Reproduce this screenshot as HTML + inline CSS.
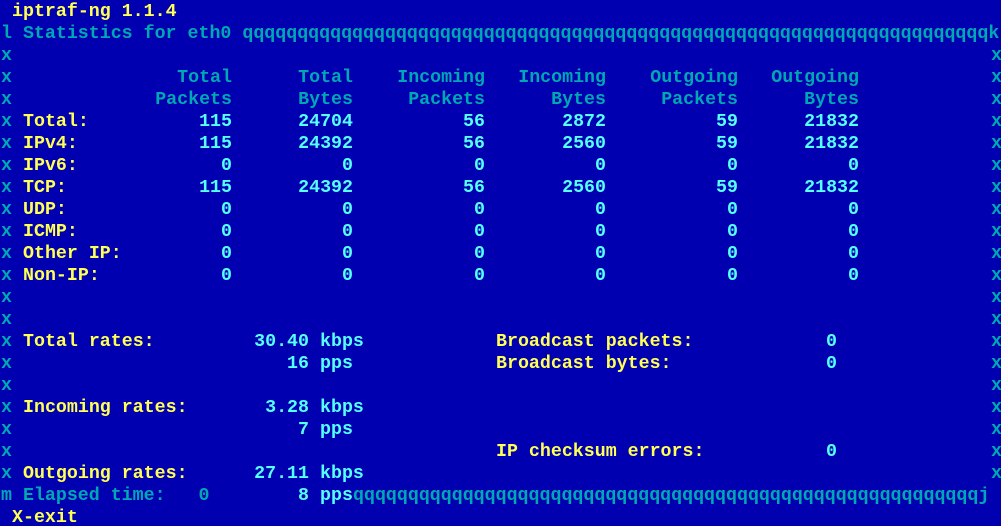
<!DOCTYPE html>
<html><head><meta charset="utf-8"><style>
html,body{margin:0;padding:0;background:#0000b0;width:1001px;height:526px;overflow:hidden}
body{position:relative;font-family:"Liberation Mono",monospace;font-weight:bold;font-size:18.3px}
#w{position:absolute;left:1px;top:2px;width:1001px;height:526px}
.r{position:absolute;left:0;width:1001px;height:22px;line-height:22px}
.r span{position:absolute;top:0;white-space:pre}
.d{color:#00a8b4}.b{color:#55ffff}.y{color:#ffff55}
.n{left:0;text-align:right}
.c1{width:231px}.c2{width:352px}.c3{width:484px}.c4{width:605px}.c5{width:737px}.c6{width:858px}
.rt{width:308px}
.xl{left:0}.xr{left:990px}
</style></head><body><div id="w">
<div class="r" style="top:-1px"><span class="y" style="left:11px">iptraf-ng 1.1.4</span></div>
<div class="r" style="top:21px"><span class="d" style="left:0">l Statistics for eth0 qqqqqqqqqqqqqqqqqqqqqqqqqqqqqqqqqqqqqqqqqqqqqqqqqqqqqqqqqqqqqqqqqqqqk</span></div>
<div class="r" style="top:43px"><span class="d xl">x</span><span class="d xr">x</span></div>
<div class="r" style="top:65px"><span class="d xl">x</span><span class="d xr">x</span>
<span class="d n c1">Total</span><span class="d n c2">Total</span><span class="d n c3">Incoming</span><span class="d n c4">Incoming</span><span class="d n c5">Outgoing</span><span class="d n c6">Outgoing</span></div>
<div class="r" style="top:87px"><span class="d xl">x</span><span class="d xr">x</span>
<span class="d n c1">Packets</span><span class="d n c2">Bytes</span><span class="d n c3">Packets</span><span class="d n c4">Bytes</span><span class="d n c5">Packets</span><span class="d n c6">Bytes</span></div>
<div class="r" style="top:109px"><span class="d xl">x</span><span class="d xr">x</span><span class="y" style="left:22px">Total:</span>
<span class="b n c1">115</span><span class="b n c2">24704</span><span class="b n c3">56</span><span class="b n c4">2872</span><span class="b n c5">59</span><span class="b n c6">21832</span></div>
<div class="r" style="top:131px"><span class="d xl">x</span><span class="d xr">x</span><span class="y" style="left:22px">IPv4:</span>
<span class="b n c1">115</span><span class="b n c2">24392</span><span class="b n c3">56</span><span class="b n c4">2560</span><span class="b n c5">59</span><span class="b n c6">21832</span></div>
<div class="r" style="top:153px"><span class="d xl">x</span><span class="d xr">x</span><span class="y" style="left:22px">IPv6:</span>
<span class="b n c1">0</span><span class="b n c2">0</span><span class="b n c3">0</span><span class="b n c4">0</span><span class="b n c5">0</span><span class="b n c6">0</span></div>
<div class="r" style="top:175px"><span class="d xl">x</span><span class="d xr">x</span><span class="y" style="left:22px">TCP:</span>
<span class="b n c1">115</span><span class="b n c2">24392</span><span class="b n c3">56</span><span class="b n c4">2560</span><span class="b n c5">59</span><span class="b n c6">21832</span></div>
<div class="r" style="top:197px"><span class="d xl">x</span><span class="d xr">x</span><span class="y" style="left:22px">UDP:</span>
<span class="b n c1">0</span><span class="b n c2">0</span><span class="b n c3">0</span><span class="b n c4">0</span><span class="b n c5">0</span><span class="b n c6">0</span></div>
<div class="r" style="top:219px"><span class="d xl">x</span><span class="d xr">x</span><span class="y" style="left:22px">ICMP:</span>
<span class="b n c1">0</span><span class="b n c2">0</span><span class="b n c3">0</span><span class="b n c4">0</span><span class="b n c5">0</span><span class="b n c6">0</span></div>
<div class="r" style="top:241px"><span class="d xl">x</span><span class="d xr">x</span><span class="y" style="left:22px">Other IP:</span>
<span class="b n c1">0</span><span class="b n c2">0</span><span class="b n c3">0</span><span class="b n c4">0</span><span class="b n c5">0</span><span class="b n c6">0</span></div>
<div class="r" style="top:263px"><span class="d xl">x</span><span class="d xr">x</span><span class="y" style="left:22px">Non-IP:</span>
<span class="b n c1">0</span><span class="b n c2">0</span><span class="b n c3">0</span><span class="b n c4">0</span><span class="b n c5">0</span><span class="b n c6">0</span></div>
<div class="r" style="top:285px"><span class="d xl">x</span><span class="d xr">x</span></div>
<div class="r" style="top:307px"><span class="d xl">x</span><span class="d xr">x</span></div>
<div class="r" style="top:329px"><span class="d xl">x</span><span class="d xr">x</span><span class="y" style="left:22px">Total rates:</span>
<span class="b n rt">30.40</span><span class="b" style="left:319px">kbps</span><span class="y" style="left:495px">Broadcast packets:</span><span class="b" style="left:825px">0</span></div>
<div class="r" style="top:351px"><span class="d xl">x</span><span class="d xr">x</span>
<span class="b n rt">16</span><span class="b" style="left:319px">pps</span><span class="y" style="left:495px">Broadcast bytes:</span><span class="b" style="left:825px">0</span></div>
<div class="r" style="top:373px"><span class="d xl">x</span><span class="d xr">x</span></div>
<div class="r" style="top:395px"><span class="d xl">x</span><span class="d xr">x</span><span class="y" style="left:22px">Incoming rates:</span>
<span class="b n rt">3.28</span><span class="b" style="left:319px">kbps</span></div>
<div class="r" style="top:417px"><span class="d xl">x</span><span class="d xr">x</span>
<span class="b n rt">7</span><span class="b" style="left:319px">pps</span></div>
<div class="r" style="top:439px"><span class="d xl">x</span><span class="d xr">x</span><span class="y" style="left:495px">IP checksum errors:</span><span class="b" style="left:825px">0</span></div>
<div class="r" style="top:461px"><span class="d xl">x</span><span class="d xr">x</span><span class="y" style="left:22px">Outgoing rates:</span>
<span class="b n rt">27.11</span><span class="b" style="left:319px">kbps</span></div>
<div class="r" style="top:483px"><span class="d" style="left:0">m Elapsed time:   0</span>
<span class="b n rt">8</span><span class="b" style="left:319px">pps</span><span class="d" style="left:352px">qqqqqqqqqqqqqqqqqqqqqqqqqqqqqqqqqqqqqqqqqqqqqqqqqqqqqqqqqj</span></div>
<div class="r" style="top:505px"><span class="y" style="left:11px">X-exit</span></div>
</div></body></html>
